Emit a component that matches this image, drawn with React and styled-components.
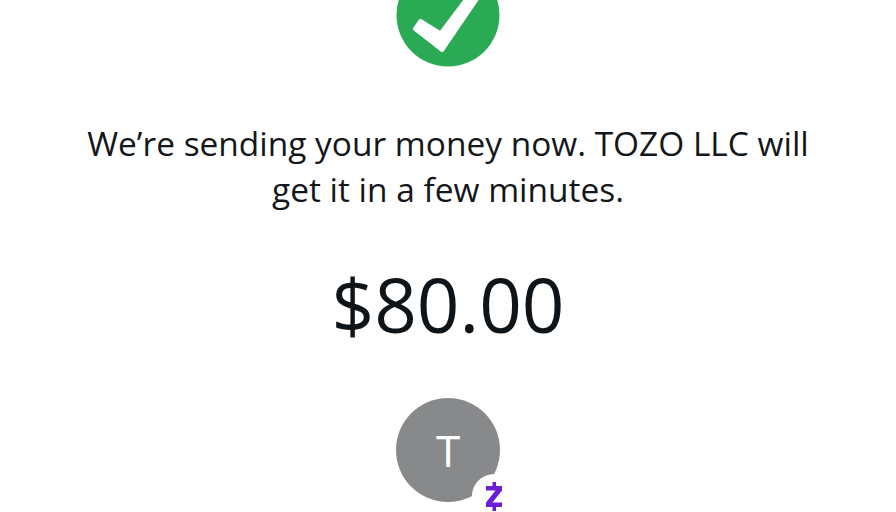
import React from "react";
import styled, { createGlobalStyle } from "styled-components";

const Global = createGlobalStyle`
  html, body { margin: 0; padding: 0; background: #fff; overflow: hidden; }
  #root { height: 512px; overflow: hidden; }
`;

const Screen = styled.main`
  width: 896px;
  height: 512px;
  overflow: hidden;
  display: flex;
  flex-direction: column;
  align-items: center;
  font-family: "Open Sans", sans-serif;
  color: #0f1419;
`;

const SuccessMark = styled.svg`
  display: block;
  flex: none;
  width: 104px;
  height: 104px;
  margin-top: -37px;
`;

const Message = styled.p`
  width: 760px;
  margin: 53px 0 0;
  font-size: 33.45px;
  line-height: 46px;
  text-align: center;
  color: #14171a;
`;

const Amount = styled.div`
  margin-top: 40px;
  font-size: 74.7px;
  line-height: 104px;
`;

const Avatar = styled.div`
  position: relative;
  flex: none;
  width: 104px;
  height: 104px;
  margin-top: 42px;
  border-radius: 50%;
  background: #88898b;
  color: #fff;
  display: flex;
  align-items: center;
  justify-content: center;
  font-size: 44px;
  line-height: 1;
`;

const BadgeCutout = styled.span`
  position: absolute;
  left: 76px;
  top: 76px;
  width: 44px;
  height: 44px;
  border-radius: 50%;
  background: #fff;
`;

const BadgeGlyph = styled.svg`
  position: absolute;
  left: 89px;
  top: 84px;
  width: 18px;
  height: 29px;
`;

export default function App() {
  return (
    <>
      <Global />
      <Screen>
        <SuccessMark viewBox="0 0 104 104" aria-hidden="true">
          <circle cx="52" cy="52" r="51.5" fill="#2aaa55" />
          <path d="M24.500 58 L44.500 70.500 L75 30 H85 L46 87 L19 66 Z" fill="#fff" stroke="#fff" strokeWidth="4" strokeLinejoin="round" />
        </SuccessMark>
        <Message>We’re sending your money now. TOZO LLC will get it in a few minutes.</Message>
        <Amount>$80.00</Amount>
        <Avatar>
          T
          <BadgeCutout />
          <BadgeGlyph viewBox="0 0 18 29" aria-hidden="true">
            <path d="M7.500 0h3.500v4h6v4.500L7.500 20.500H17V25H11V29H7.500V25H1V20.500L10.500 8.500H1V4H7.500Z" fill="#6d1ed4" />
          </BadgeGlyph>
        </Avatar>
      </Screen>
    </>
  );
}
